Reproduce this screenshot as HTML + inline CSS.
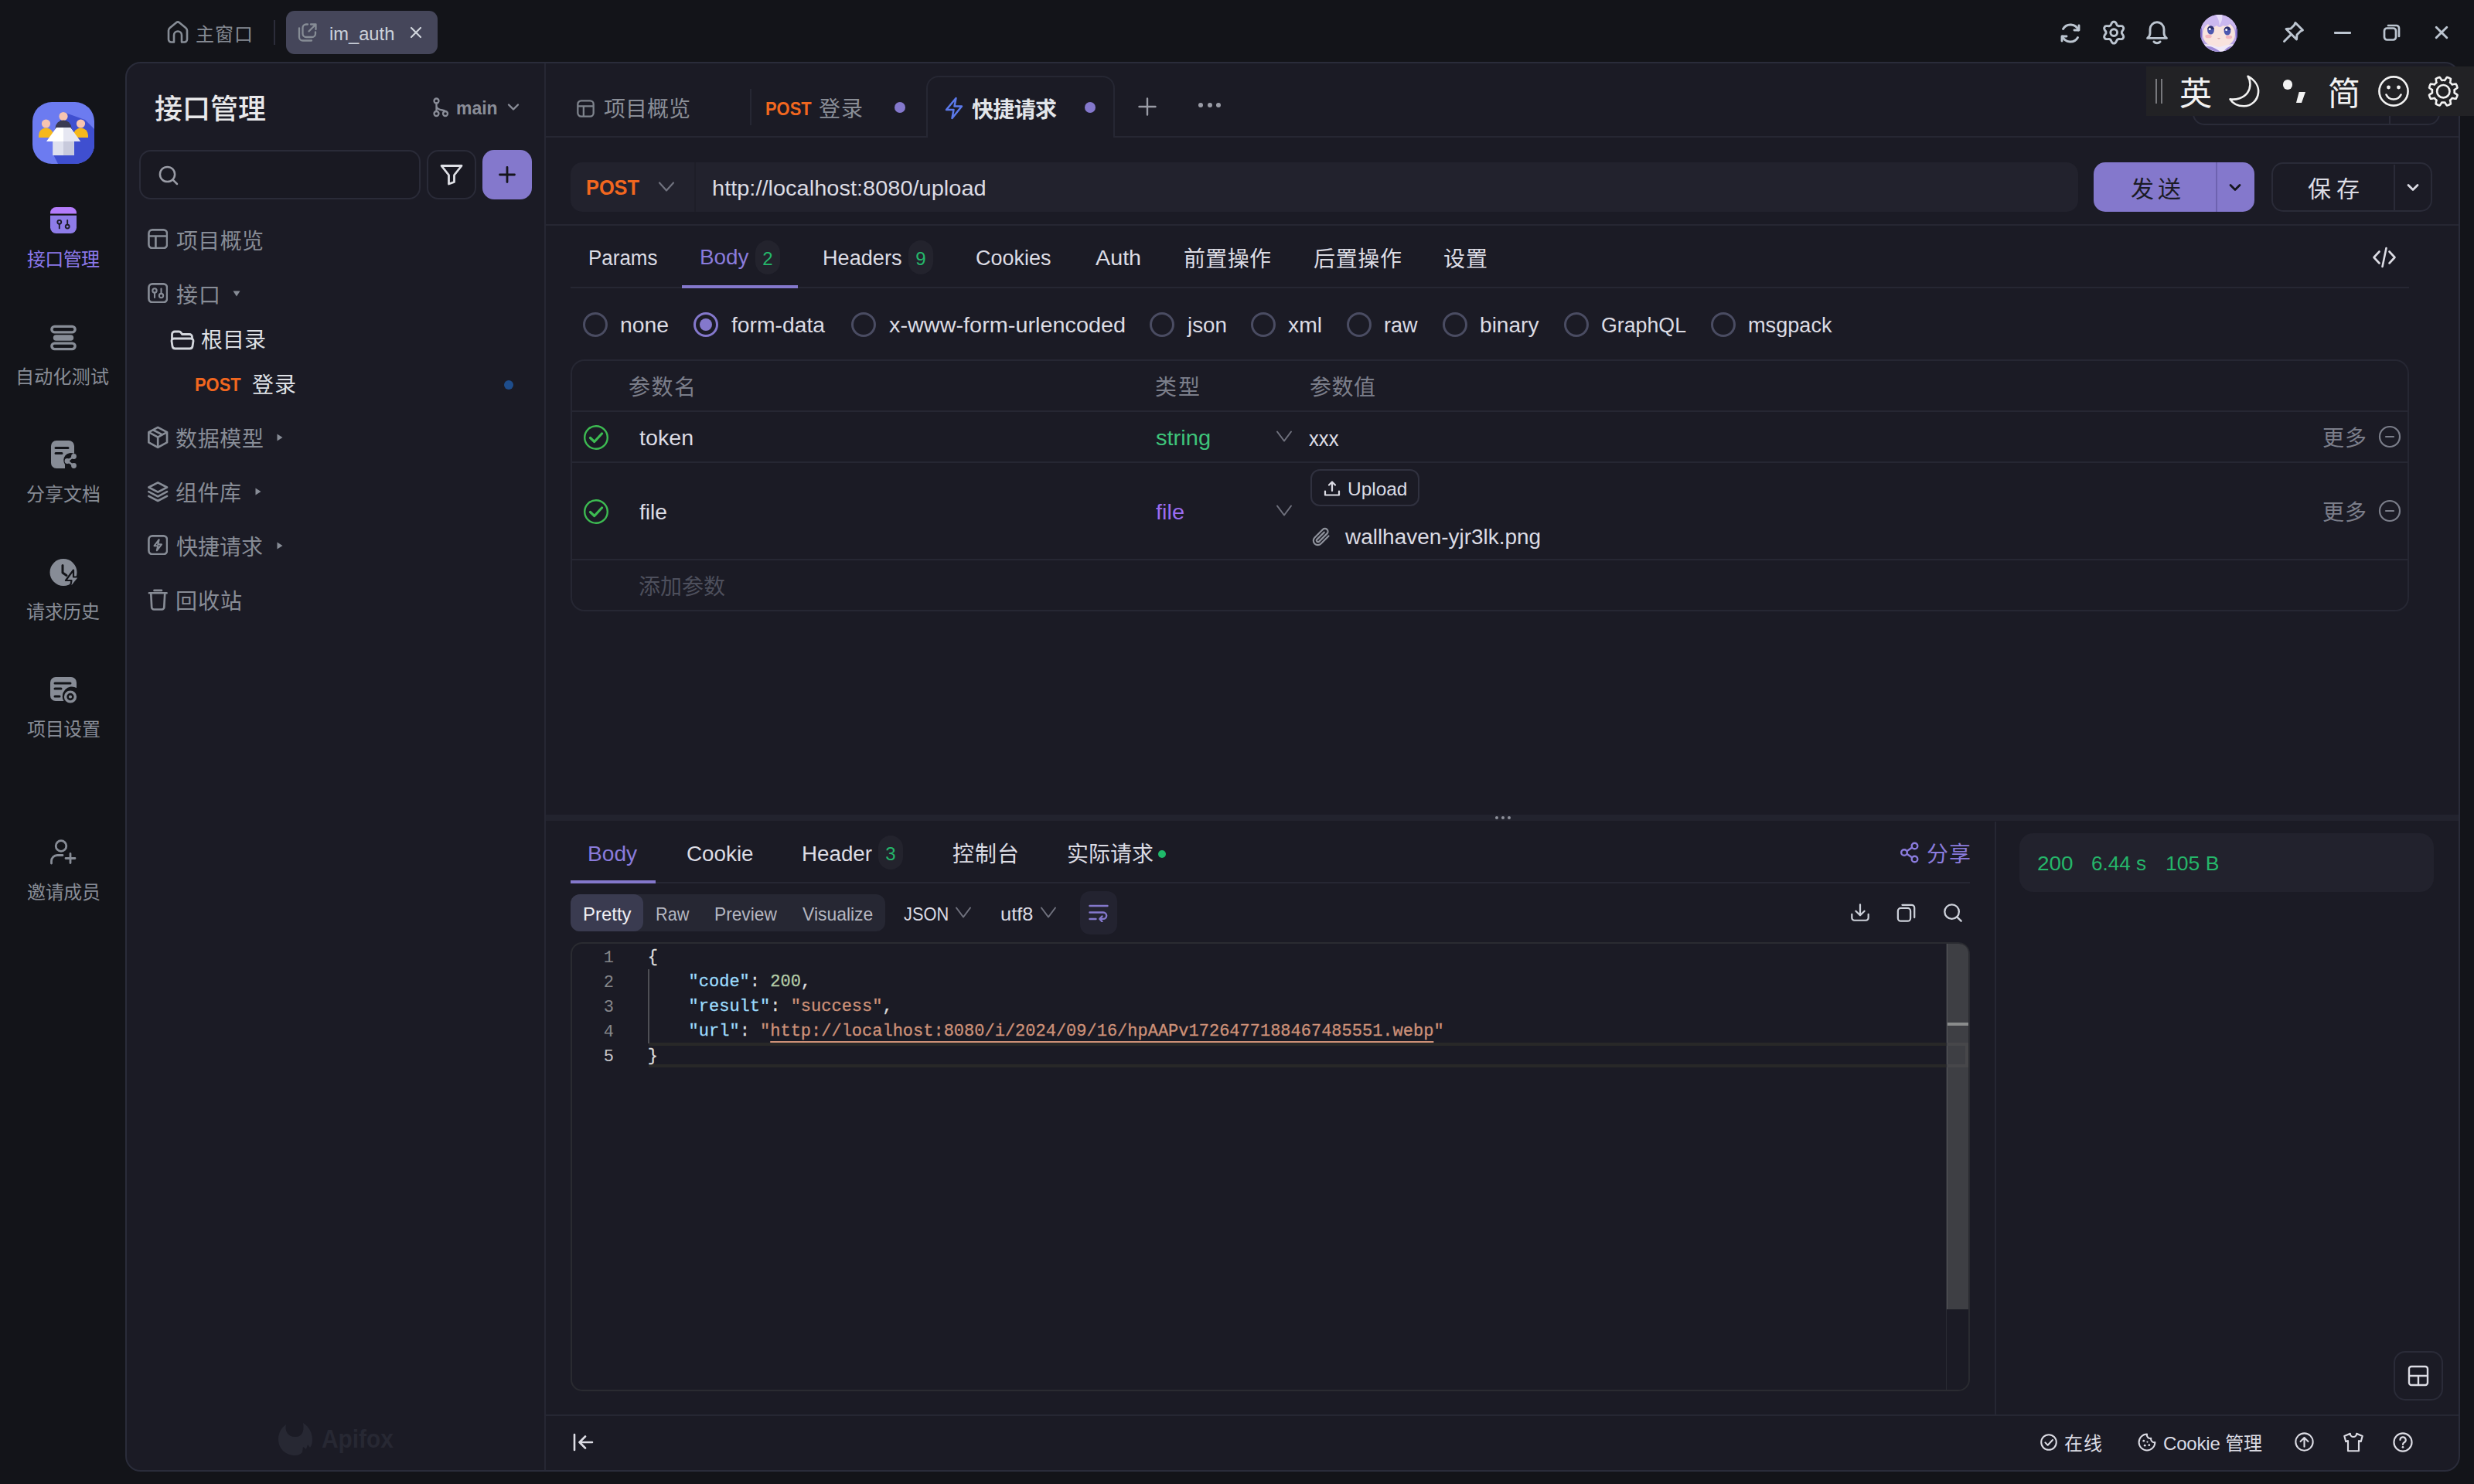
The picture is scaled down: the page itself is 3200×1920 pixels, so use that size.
<!DOCTYPE html>
<html lang="zh-CN"><head><meta charset="utf-8"><title>Apifox - im_auth</title><style>
html,body{margin:0;padding:0;}
body{width:3200px;height:1920px;position:relative;overflow:hidden;background:#131419;font-family:"Liberation Sans","Noto Sans CJK SC",sans-serif;}
.b{position:absolute;box-sizing:border-box;display:block;}
.t{position:absolute;white-space:pre;display:block;}
</style></head><body>
<div id="window-chrome">
<div class="b" style="left:162px;top:80px;width:3020px;height:1824px;background:#1b1b25;border:2px solid #2a2c3a;border-radius:20px;"></div>
<div class="b" style="left:704px;top:82px;width:2px;height:1820px;background:#262733;"></div>
<svg class="b" style="left:215px;top:26px;" width="30" height="32" viewBox="0 0 30 32" fill="none"><path d="M3 13.5 C3 12 3.6 11 4.8 10 L13 3.2 a3.2 3.2 0 0 1 4 0 L25.2 10 C26.4 11 27 12 27 13.5 V25 a3.5 3.5 0 0 1 -3.5 3.5 H20 V19.5 a5 5 0 0 0 -10 0 V28.5 H6.5 a3.5 3.5 0 0 1 -3.5 -3.5 Z" stroke="#878d96" stroke-width="2.6" stroke-linejoin="round"/></svg>
<span class="t" id="t0" style="left:253.00px;top:27.5px;font-size:24px;line-height:34px;color:#868b94;letter-spacing:1.000px;">主窗口</span>
<div class="b" style="left:354px;top:26px;width:2px;height:32px;background:#2c2d3a;"></div>
<div class="b" style="left:370px;top:14px;width:196px;height:56px;background:#45465a;border-radius:11px;"></div>
<svg class="b" style="left:385px;top:29px;" width="26" height="26" viewBox="0 0 26 26" fill="none"><path d="M2 7.5 V19 a4.5 4.5 0 0 0 4.5 4.5 H18" stroke="#878d96" stroke-width="2.3" stroke-linecap="round"/><path d="M13 2.5 H11 a4.5 4.5 0 0 0 -4.5 4.5 V14.5 a4.5 4.5 0 0 0 4.5 4.5 H18.5 a4.5 4.5 0 0 0 4.5 -4.5 V12.5" stroke="#878d96" stroke-width="2.3" stroke-linecap="round"/><path d="M17 2.5 H23.5 V9 M23.5 2.5 L14.5 11.5" stroke="#878d96" stroke-width="2.3" stroke-linecap="round" stroke-linejoin="round"/></svg>
<span class="t" id="t1" style="left:426.01px;top:27.0px;font-size:24px;line-height:34px;color:#ccd2da;transform:scaleX(0.9875);transform-origin:0 50%;">im_auth</span>
<svg class="b" style="left:530px;top:34px;" width="16" height="16" viewBox="0 0 16 16" fill="none"><path d="M2 2 L14 14 M14 2 L2 14" stroke="#d0d5dc" stroke-width="2.2" stroke-linecap="round"/></svg>
<svg class="b" style="left:2662px;top:27px;" width="32" height="32" viewBox="0 0 32 32" fill="none"><path d="M27 6 V12 H21" stroke="#bcc5d0" stroke-width="2.9" stroke-linecap="round" stroke-linejoin="round"/><path d="M5 26 V20 H11" stroke="#bcc5d0" stroke-width="2.9" stroke-linecap="round" stroke-linejoin="round"/><path d="M26.3 12 A11 11 0 0 0 6.5 10.5 M5.7 20 A11 11 0 0 0 25.5 21.5" stroke="#bcc5d0" stroke-width="2.9" stroke-linecap="round"/></svg>
<svg class="b" style="left:2718px;top:26px;" width="32" height="32" viewBox="0 0 32 32" fill="none"><path d="M16.2 2.2 L16.6 2.2 L16.9 2.2 L17.3 2.2 L17.6 2.4 L18.0 2.7 L18.3 3.0 L18.6 3.3 L18.8 3.7 L19.1 4.1 L19.3 4.5 L19.5 4.9 L19.7 5.3 L19.9 5.7 L20.1 6.0 L20.2 6.4 L20.4 6.7 L20.6 6.9 L20.8 7.0 L21.1 7.1 L21.3 7.3 L21.5 7.4 L21.8 7.5 L22.0 7.7 L22.3 7.7 L22.6 7.7 L23.0 7.7 L23.4 7.7 L23.8 7.6 L24.3 7.6 L24.7 7.6 L25.2 7.6 L25.6 7.6 L26.1 7.6 L26.5 7.7 L27.0 7.8 L27.3 8.0 L27.7 8.2 L27.9 8.5 L28.1 8.8 L28.2 9.1 L28.4 9.5 L28.6 9.8 L28.7 10.1 L28.8 10.5 L28.7 10.9 L28.6 11.3 L28.5 11.8 L28.3 12.2 L28.1 12.6 L27.8 13.0 L27.6 13.4 L27.3 13.7 L27.1 14.1 L26.9 14.4 L26.7 14.7 L26.5 15.0 L26.4 15.3 L26.4 15.6 L26.4 15.8 L26.4 16.1 L26.4 16.4 L26.4 16.6 L26.4 16.9 L26.5 17.2 L26.7 17.5 L26.9 17.8 L27.1 18.1 L27.3 18.5 L27.6 18.8 L27.8 19.2 L28.1 19.6 L28.3 20.0 L28.5 20.4 L28.6 20.9 L28.7 21.3 L28.8 21.7 L28.7 22.1 L28.6 22.4 L28.4 22.7 L28.2 23.1 L28.1 23.4 L27.9 23.7 L27.7 24.0 L27.3 24.2 L27.0 24.4 L26.5 24.5 L26.1 24.6 L25.6 24.6 L25.2 24.6 L24.7 24.6 L24.3 24.6 L23.8 24.6 L23.4 24.5 L23.0 24.5 L22.6 24.5 L22.3 24.5 L22.0 24.5 L21.8 24.7 L21.5 24.8 L21.3 24.9 L21.1 25.1 L20.8 25.2 L20.6 25.3 L20.4 25.5 L20.2 25.8 L20.1 26.2 L19.9 26.5 L19.7 26.9 L19.5 27.3 L19.3 27.7 L19.1 28.1 L18.8 28.5 L18.6 28.9 L18.3 29.2 L18.0 29.5 L17.6 29.8 L17.3 30.0 L16.9 30.0 L16.6 30.0 L16.2 30.0 L15.8 30.0 L15.5 30.0 L15.1 30.0 L14.8 29.8 L14.4 29.5 L14.1 29.2 L13.8 28.9 L13.6 28.5 L13.3 28.1 L13.1 27.7 L12.9 27.3 L12.7 26.9 L12.5 26.5 L12.3 26.2 L12.2 25.8 L12.0 25.5 L11.8 25.3 L11.6 25.2 L11.3 25.1 L11.1 24.9 L10.9 24.8 L10.6 24.7 L10.4 24.5 L10.1 24.5 L9.8 24.5 L9.4 24.5 L9.0 24.5 L8.6 24.6 L8.1 24.6 L7.7 24.6 L7.2 24.6 L6.8 24.6 L6.3 24.6 L5.9 24.5 L5.4 24.4 L5.1 24.2 L4.7 24.0 L4.5 23.7 L4.3 23.4 L4.2 23.1 L4.0 22.7 L3.8 22.4 L3.7 22.1 L3.6 21.7 L3.7 21.3 L3.8 20.9 L3.9 20.4 L4.1 20.0 L4.3 19.6 L4.6 19.2 L4.8 18.8 L5.1 18.5 L5.3 18.1 L5.5 17.8 L5.7 17.5 L5.9 17.2 L6.0 16.9 L6.0 16.6 L6.0 16.4 L6.0 16.1 L6.0 15.8 L6.0 15.6 L6.0 15.3 L5.9 15.0 L5.7 14.7 L5.5 14.4 L5.3 14.1 L5.1 13.7 L4.8 13.4 L4.6 13.0 L4.3 12.6 L4.1 12.2 L3.9 11.8 L3.8 11.3 L3.7 10.9 L3.6 10.5 L3.7 10.1 L3.8 9.8 L4.0 9.5 L4.2 9.1 L4.3 8.8 L4.5 8.5 L4.7 8.2 L5.1 8.0 L5.4 7.8 L5.9 7.7 L6.3 7.6 L6.8 7.6 L7.2 7.6 L7.7 7.6 L8.1 7.6 L8.6 7.6 L9.0 7.7 L9.4 7.7 L9.8 7.7 L10.1 7.7 L10.4 7.7 L10.6 7.5 L10.9 7.4 L11.1 7.3 L11.3 7.1 L11.6 7.0 L11.8 6.9 L12.0 6.7 L12.2 6.4 L12.3 6.0 L12.5 5.7 L12.7 5.3 L12.9 4.9 L13.1 4.5 L13.3 4.1 L13.6 3.7 L13.8 3.3 L14.1 3.0 L14.4 2.7 L14.8 2.4 L15.1 2.2 L15.5 2.2 L15.8 2.2 Z" stroke="#bcc5d0" stroke-width="2.9" stroke-linejoin="round"/><circle cx="16.2" cy="16.1" r="4.4" stroke="#bcc5d0" stroke-width="2.9"/></svg>
<svg class="b" style="left:2774px;top:26px;" width="32" height="32" viewBox="0 0 32 32" fill="none"><path d="M16 2.8 a9 9 0 0 1 9 9 V17 c0 2.5 1.2 4.6 3.4 6.4 H3.6 C5.8 21.6 7 19.5 7 17 V11.8 a9 9 0 0 1 9 -9 Z" stroke="#bcc5d0" stroke-width="2.9" stroke-linejoin="round"/><path d="M12 28 a4.6 3.4 0 0 0 8 0" stroke="#bcc5d0" stroke-width="2.9" stroke-linecap="round"/></svg>
<svg class="b" style="left:2846px;top:19px" width="48" height="48" viewBox="0 0 48 48"><defs><clipPath id="av"><circle cx="24" cy="24" r="24"/></clipPath></defs><g clip-path="url(#av)"><rect width="48" height="48" fill="#b9a5e6"/><ellipse cx="24" cy="25" rx="21" ry="18" fill="#f8e3de"/><path d="M0 0 H48 V26 C46 18 43 14 39 11 C37 14 33 16 29 14 C28 16 24 17 21 14 C18 17 13 17 10 12 C5 15 2 20 0 27 Z" fill="#cbb8ef"/><path d="M20 0 C23 5 25 9 24.5 14 C28 9 29 4 28 0 Z" fill="#e6dcf8"/><path d="M0 12 C3 18 3 26 1 34 L0 36 Z M48 12 C45 18 45 26 47 34 L48 36 Z" fill="#7f6cc6"/><ellipse cx="13.5" cy="20" rx="4.4" ry="5.6" fill="#4d58b0"/><ellipse cx="35" cy="21" rx="4.4" ry="5.6" fill="#4d58b0"/><path d="M9.1 19 a4.4 4.6 0 0 1 8.8 0 Z M30.6 20 a4.4 4.6 0 0 1 8.8 0 Z" fill="#2c2f6e"/><circle cx="12.2" cy="18.6" r="1.5" fill="#fff"/><circle cx="33.7" cy="19.6" r="1.5" fill="#fff"/><ellipse cx="10.5" cy="28" rx="4.2" ry="2.3" fill="#f3a9b6" opacity=".75"/><ellipse cx="37" cy="29" rx="4.2" ry="2.3" fill="#f3a9b6" opacity=".75"/><path d="M22.5 30.5 q1.5 1 3 0" stroke="#c98d8d" stroke-width=".9" fill="none"/><path d="M0 48 V40 C8 36 14 40 24 42 C34 40 40 36 48 40 V48 Z" fill="#efe9f8"/><path d="M6 41 C14 40 20 44 26 48 H18 C14 45 10 43 4 43 Z M44 40 C38 40 33 43 30 48 H36 C38 45 41 43 46 42 Z" fill="#9d8ad8"/></g></svg>
<svg class="b" style="left:2950px;top:26px;" width="32" height="32" viewBox="0 0 32 32" fill="none"><path d="M19 3.5 L28.5 13 L25.5 14.5 L21 19 L20.5 25 L7 11.5 L13 11 L17.5 6.5 Z" stroke="#bcc5d0" stroke-width="2.9" stroke-linejoin="round"/><path d="M13.5 18.5 L4.5 27.5" stroke="#bcc5d0" stroke-width="2.9" stroke-linecap="round"/></svg>
<div class="b" style="left:3019px;top:41px;width:22px;height:3px;background:#bcc5d0;border-radius:1px;"></div>
<svg class="b" style="left:3082px;top:30px;" width="24" height="24" viewBox="0 0 24 24" fill="none"><rect x="2" y="6.5" width="15" height="15" rx="3.5" stroke="#bcc5d0" stroke-width="2.7"/><path d="M7 3 H17.5 a3.5 3.5 0 0 1 3.5 3.5 V17" stroke="#bcc5d0" stroke-width="2.7" stroke-linecap="round"/></svg>
<svg class="b" style="left:3148px;top:32px;" width="20" height="20" viewBox="0 0 20 20" fill="none"><path d="M3.2 3.2 L16.8 16.8 M16.8 3.2 L3.2 16.8" stroke="#bcc5d0" stroke-width="2.9" stroke-linecap="round"/></svg>
<svg class="b" style="left:42px;top:132px" width="80" height="80" viewBox="0 0 80 80"><defs><clipPath id="ai"><rect width="80" height="80" rx="25"/></clipPath></defs><g clip-path="url(#ai)"><rect width="80" height="80" fill="#6c7bf0"/><path d="M40 13 L68 23 L90 45 V90 H38 L27.5 69 V45 Z" fill="#3f4fd0"/><circle cx="17.5" cy="28" r="5.6" fill="#f7c4b0"/><circle cx="62.5" cy="28" r="5.6" fill="#f7c4b0"/><circle cx="40" cy="18.5" r="5.6" fill="#f7c4b0"/><path d="M8 46 V43 a9.5 9.5 0 0 1 19 0 V46 Z" fill="#f5b81c"/><path d="M53 46 V43 a9.5 9.5 0 0 1 19 0 V46 Z" fill="#f5b81c"/><path d="M29.5 38 V34 a10.5 10.5 0 0 1 21 0 V38 Z" fill="#3a3a52"/><path d="M31 33 H49 L62 51 H53.5 V69 H26.5 V51 H18 Z" fill="#ffffff"/><path d="M40 33 H49 L62 51 H53.5 V69 H40 Z" fill="#e6e7f2"/><path d="M26.5 51 H53.5 V69 H26.5 Z" fill="#dfe1ee"/><path d="M40 51 H53.5 V69 H40 Z" fill="#c8cadc"/></g></svg>
<svg class="b" style="left:65px;top:268px;" width="34" height="34" viewBox="0 0 36 36" fill="none"><path d="M0 8 a8 8 0 0 1 8 -8 H28 a8 8 0 0 1 8 8 V9 H0 Z" fill="#b47cfb"/><path d="M0 11.5 H36 V28 a8 8 0 0 1 -8 8 H8 a8 8 0 0 1 -8 -8 Z" fill="#8e7ce8"/><circle cx="12.5" cy="20.5" r="2.6" stroke="#1b1b25" stroke-width="2"/><path d="M12.5 23 V29" stroke="#1b1b25" stroke-width="2" stroke-linecap="round"/><circle cx="23.5" cy="26.5" r="2.6" stroke="#1b1b25" stroke-width="2"/><path d="M23.5 24 V18" stroke="#1b1b25" stroke-width="2" stroke-linecap="round"/></svg>
<span class="t" id="t2" style="left:35.00px;top:318.5px;font-size:24px;line-height:34px;color:#8b78ea;letter-spacing:-0.667px;">接口管理</span>
<svg class="b" style="left:65px;top:420px;" width="34" height="34" viewBox="0 0 36 36" fill="none"><rect x="2" y="2.5" width="32" height="8" rx="4" stroke="#878c96" stroke-width="3.6"/><rect x="2" y="25.5" width="32" height="8" rx="4" stroke="#878c96" stroke-width="3.6"/><rect x="4" y="14" width="28" height="8" rx="4" fill="#878c96"/></svg>
<span class="t" id="t3" style="left:20.00px;top:471.0px;font-size:24px;line-height:34px;color:#878c96;letter-spacing:0.250px;">自动化测试</span>
<svg class="b" style="left:66px;top:570px;" width="36" height="38" viewBox="0 0 36 38" fill="none"><path d="M0 7 a7 7 0 0 1 7 -7 H23 a7 7 0 0 1 7 7 V17 a9.5 9.5 0 0 0 -12 14 V36 H7 a7 7 0 0 1 -7 -7 Z" fill="#878c96"/><path d="M6 9.5 H22 M6 16.5 H14" stroke="#131419" stroke-width="3" stroke-linecap="round"/><circle cx="29.5" cy="20.5" r="3.4" fill="#878c96"/><circle cx="21" cy="26.5" r="3.4" fill="#878c96"/><circle cx="29.5" cy="32.5" r="3.4" fill="#878c96"/><path d="M29.5 20.5 L21 26.5 L29.5 32.5" stroke="#878c96" stroke-width="2.4"/></svg>
<span class="t" id="t4" style="left:34.00px;top:623.0px;font-size:24px;line-height:34px;color:#878c96;">分享文档</span>
<svg class="b" style="left:64px;top:722px;" width="38" height="40" viewBox="0 0 38 40" fill="none"><path d="M18 1 a17.5 17.5 0 1 1 0 35 a17.5 17.5 0 0 1 0 -35 Z" fill="#878c96"/><path d="M17 9.5 V19 L22 22.5" stroke="#131419" stroke-width="3" stroke-linecap="round" stroke-linejoin="round"/><path d="M31 15.5 L21 29 H28.5 L26.5 39.5 L38.5 24.5 H31 Z" fill="#878c96" stroke="#131419" stroke-width="2.2" stroke-linejoin="round"/></svg>
<span class="t" id="t5" style="left:34.00px;top:775.0px;font-size:24px;line-height:34px;color:#878c96;letter-spacing:-0.333px;">请求历史</span>
<svg class="b" style="left:65px;top:876px;" width="38" height="38" viewBox="0 0 38 38" fill="none"><path d="M0 7 a7 7 0 0 1 7 -7 H27 a7 7 0 0 1 7 7 V14 a12 12 0 0 0 -16 17 H7 a7 7 0 0 1 -7 -7 Z" fill="#878c96"/><path d="M6 8 H26 M6 15 H14 M6 25 H12" stroke="#131419" stroke-width="3" stroke-linecap="round"/><circle cx="26" cy="25.5" r="9.2" fill="#878c96" stroke="#131419" stroke-width="2.2"/><circle cx="26" cy="25.5" r="3.4" stroke="#131419" stroke-width="2.6"/></svg>
<span class="t" id="t6" style="left:35.00px;top:927.0px;font-size:24px;line-height:34px;color:#878c96;letter-spacing:-0.333px;">项目设置</span>
<svg class="b" style="left:64px;top:1085px;" width="36" height="34" viewBox="0 0 36 34" fill="none"><circle cx="15" cy="9.5" r="6.8" stroke="#878c96" stroke-width="2.8"/><path d="M2.5 32 V29 a7.5 7.5 0 0 1 7.5 -7.5 H17" stroke="#878c96" stroke-width="2.8" stroke-linecap="round"/><path d="M27 19.5 V31.5 M21 25.5 H33" stroke="#878c96" stroke-width="2.8" stroke-linecap="round"/></svg>
<span class="t" id="t7" style="left:35.00px;top:1138.0px;font-size:24px;line-height:34px;color:#878c96;letter-spacing:-0.333px;">邀请成员</span>
</div>
<aside id="api-tree">
<span class="t" id="t8" style="left:200.00px;top:117.0px;font-size:36px;line-height:50px;color:#e8e8ea;font-weight:500;">接口管理</span>
<svg class="b" style="left:558px;top:124px;" width="24" height="30" viewBox="0 0 24 30" fill="none"><circle cx="6.5" cy="6.5" r="3" stroke="#8a8d98" stroke-width="2.3"/><circle cx="6.5" cy="23" r="3" stroke="#8a8d98" stroke-width="2.3"/><circle cx="18" cy="23" r="3" stroke="#8a8d98" stroke-width="2.3"/><path d="M6.5 9.5 V20 M6.5 13 c0 4 4 5 7.5 5.5 c2 .4 3.5 1 4 1.5" stroke="#8a8d98" stroke-width="2.3" stroke-linecap="round"/></svg>
<span class="t" id="t9" style="left:590.04px;top:122.5px;font-size:24px;line-height:34px;color:#8a8d98;font-weight:700;transform:scaleX(0.9567);transform-origin:0 50%;">main</span>
<svg class="b" style="left:656px;top:132px;" width="16" height="14" viewBox="0 0 16 14" fill="none"><path d="M2 3.5 L8 9.5 L14 3.5" stroke="#8a8d98" stroke-width="2.4" stroke-linecap="round" stroke-linejoin="round"/></svg>
<div class="b" style="left:180px;top:194px;width:364px;height:64px;background:#191922;border:2px solid #2a2b38;border-radius:15px;"></div>
<svg class="b" style="left:204px;top:213px;" width="28" height="28" viewBox="0 0 28 28" fill="none"><circle cx="12.5" cy="12.5" r="9.6" stroke="#9a9ca6" stroke-width="2.5"/><path d="M19.6 19.6 L25 25" stroke="#9a9ca6" stroke-width="2.5" stroke-linecap="round"/></svg>
<div class="b" style="left:552px;top:194px;width:64px;height:64px;background:#191922;border:2px solid #2a2b38;border-radius:15px;"></div>
<svg class="b" style="left:568px;top:210px;" width="32" height="32" viewBox="0 0 32 32" fill="none"><path d="M3 4.5 H29 L19.5 16.5 V25.5 L12.5 28 V16.5 Z" stroke="#dfe0e6" stroke-width="2.8" stroke-linejoin="round"/></svg>
<div class="b" style="left:624px;top:194px;width:64px;height:64px;background:#8478cc;border-radius:15px;"></div>
<svg class="b" style="left:644px;top:214px;" width="24" height="24" viewBox="0 0 24 24" fill="none"><path d="M12 2.5 V21.5 M2.5 12 H21.5" stroke="#15151c" stroke-width="2.8" stroke-linecap="round"/></svg>
<svg class="b" style="left:190.8px;top:295.8px;" width="26.5" height="26.5" viewBox="0 0 28 28" fill="none"><rect x="1.5" y="1.5" width="25" height="25" rx="5" stroke="#878c96" stroke-width="2.8"/><path d="M1.5 10 H26.5 M11 10 V26.5" stroke="#878c96" stroke-width="2.8"/></svg>
<span class="t" id="t10" style="left:228.00px;top:292.5px;font-size:28px;line-height:39px;color:#878c96;letter-spacing:0.333px;">项目概览</span>
<svg class="b" style="left:190.8px;top:365.8px;" width="26.5" height="26.5" viewBox="0 0 28 28" fill="none"><rect x="1.5" y="1.5" width="25" height="25" rx="5" stroke="#878c96" stroke-width="2.8"/><circle cx="9.5" cy="10.5" r="2.8" stroke="#878c96" stroke-width="2.2"/><path d="M9.5 13.5 V20" stroke="#878c96" stroke-width="2.2" stroke-linecap="round"/><circle cx="18.5" cy="17.5" r="2.8" stroke="#878c96" stroke-width="2.2"/><path d="M18.5 14.5 V8" stroke="#878c96" stroke-width="2.2" stroke-linecap="round"/></svg>
<span class="t" id="t11" style="left:228.00px;top:362.5px;font-size:28px;line-height:39px;color:#878c96;letter-spacing:1.000px;">接口</span>
<svg class="b" style="left:301px;top:376px;" width="10" height="8" viewBox="0 0 10 8" fill="none"><path d="M0.5 0.5 H9.5 L5 7.5 Z" fill="#878c96"/></svg>
<svg class="b" style="left:220px;top:426px;" width="32" height="28" viewBox="0 0 32 28" fill="none"><path d="M2.5 12 V6.5 a3.5 3.5 0 0 1 3.5 -3.5 H11.5 c1.2 0 2 .5 2.8 1.6 L15.5 6.5 H25 a3.5 3.5 0 0 1 3.5 3.5 V12" stroke="#d4d7dd" stroke-width="2.8" stroke-linejoin="round" stroke-linecap="round"/><path d="M5.5 12 H27 a3 3 0 0 1 3 3.4 L29 22 a3.5 3.5 0 0 1 -3.5 3 H6.5 a3.5 3.5 0 0 1 -3.5 -3 L2 15.4 a3 3 0 0 1 3 -3.4 Z" stroke="#d4d7dd" stroke-width="2.8" stroke-linejoin="round"/></svg>
<span class="t" id="t12" style="left:260.00px;top:421.0px;font-size:28px;line-height:39px;color:#dfe1e6;">根目录</span>
<span class="t" id="t13" style="left:252.09px;top:481.0px;font-size:24px;line-height:34px;color:#f2671f;font-weight:700;transform:scaleX(0.9121);transform-origin:0 50%;">POST</span>
<span class="t" id="t14" style="left:326.00px;top:478.5px;font-size:28px;line-height:39px;color:#dfe1e6;letter-spacing:1.000px;">登录</span>
<div class="b" style="left:652px;top:492px;width:12px;height:12px;background:#1e4d8c;border-radius:6px;"></div>
<svg class="b" style="left:189.8px;top:550.9px;" width="28.4" height="30.3" viewBox="0 0 30 32" fill="none"><path d="M15 2 L27.5 8.5 V22.5 L15 29.5 L2.5 22.5 V8.5 Z" stroke="#878c96" stroke-width="2.8" stroke-linejoin="round"/><path d="M2.5 8.5 L15 15.5 L27.5 8.5 M15 15.5 V29.5 M8.5 5.5 L21 12" stroke="#878c96" stroke-width="2.8" stroke-linejoin="round"/></svg>
<span class="t" id="t15" style="left:227.00px;top:548.5px;font-size:28px;line-height:39px;color:#878c96;letter-spacing:0.667px;">数据模型</span>
<svg class="b" style="left:358px;top:561px;" width="8" height="10" viewBox="0 0 8 10" fill="none"><path d="M0.5 0.5 V9.5 L7.5 5 Z" fill="#878c96"/></svg>
<svg class="b" style="left:189.8px;top:621.8px;" width="28.4" height="28.4" viewBox="0 0 30 30" fill="none"><path d="M15 2.5 L27.5 9 L15 15.5 L2.5 9 Z" stroke="#878c96" stroke-width="2.8" stroke-linejoin="round"/><path d="M2.5 15 L15 21.5 L27.5 15 M2.5 21 L15 27.5 L27.5 21" stroke="#878c96" stroke-width="2.8" stroke-linejoin="round" stroke-linecap="round"/></svg>
<span class="t" id="t16" style="left:227.00px;top:618.5px;font-size:28px;line-height:39px;color:#878c96;letter-spacing:0.500px;">组件库</span>
<svg class="b" style="left:330px;top:631px;" width="8" height="10" viewBox="0 0 8 10" fill="none"><path d="M0.5 0.5 V9.5 L7.5 5 Z" fill="#878c96"/></svg>
<svg class="b" style="left:190.8px;top:691.8px;" width="26.5" height="26.5" viewBox="0 0 28 28" fill="none"><rect x="1.5" y="1.5" width="25" height="25" rx="5" stroke="#878c96" stroke-width="2.8"/><path d="M15.5 6.5 L9 15 H14 L12.5 21.5 L19 13 H14 Z" stroke="#878c96" stroke-width="2.2" stroke-linejoin="round"/></svg>
<span class="t" id="t17" style="left:228.00px;top:688.5px;font-size:28px;line-height:39px;color:#878c96;">快捷请求</span>
<svg class="b" style="left:358px;top:701px;" width="8" height="10" viewBox="0 0 8 10" fill="none"><path d="M0.5 0.5 V9.5 L7.5 5 Z" fill="#878c96"/></svg>
<svg class="b" style="left:190.8px;top:761.8px;" width="26.5" height="28.4" viewBox="0 0 28 30" fill="none"><path d="M2 5.5 H26 M9 2 H19" stroke="#878c96" stroke-width="2.8" stroke-linecap="round"/><path d="M4.5 6 L5.5 25 a3 3 0 0 0 3 3 H19.5 a3 3 0 0 0 3 -3 L23.5 6" stroke="#878c96" stroke-width="2.8" stroke-linejoin="round"/></svg>
<span class="t" id="t18" style="left:227.00px;top:758.5px;font-size:28px;line-height:39px;color:#878c96;letter-spacing:1.000px;">回收站</span>
<svg class="b" style="left:358px;top:1839px;" width="48" height="46" viewBox="0 0 48 46" fill="none"><path d="M24 44 C10 44 2 34 2 23 C2 15 6 8 12 4 C10 12 14 20 24 20 C32 20 36 14 34 2 C42 7 46 15 46 24 C46 28 45 31 43 34 L40 30 L38 36 L34 33 L33 40 C30 43 27 44 24 44 Z" fill="#272833"/></svg>
<span class="t" id="t19" style="left:416.00px;top:1837.0px;font-size:34px;line-height:48px;color:#272833;font-weight:700;transform:scaleX(0.8785);transform-origin:0 50%;">Apifox</span>
</aside>
<main id="request-editor">
<div class="b" style="left:706px;top:176px;width:2474px;height:2px;background:#262733;"></div>
<svg class="b" style="left:746px;top:129px;" width="23" height="23" viewBox="0 0 26 26" fill="none"><rect x="1.5" y="1.5" width="23" height="23" rx="5" stroke="#7e838c" stroke-width="2.6"/><path d="M1.5 9.5 H24.5 M10 9.5 V24.5" stroke="#7e838c" stroke-width="2.6"/></svg>
<span class="t" id="t20" style="left:781.00px;top:122.0px;font-size:28px;line-height:39px;color:#8a8e97;">项目概览</span>
<div class="b" style="left:970px;top:115px;width:2px;height:47px;background:#262733;"></div>
<span class="t" id="t21" style="left:990.09px;top:123.5px;font-size:24px;line-height:34px;color:#f2671f;font-weight:700;transform:scaleX(0.9121);transform-origin:0 50%;">POST</span>
<span class="t" id="t22" style="left:1059.00px;top:121.5px;font-size:28px;line-height:39px;color:#8a8e97;letter-spacing:1.000px;">登录</span>
<div class="b" style="left:1157px;top:132px;width:14px;height:14px;background:#8478cc;border-radius:7px;"></div>
<div class="b" style="left:1198px;top:98px;width:244px;height:80px;background:#1b1b25;border:2px solid #262733;border-radius:16px 16px 0 0;border-bottom:none;"></div>
<svg class="b" style="left:1221px;top:125px;" width="26" height="30" viewBox="0 0 26 30" fill="none"><path d="M15.5 2 L3 17 H12.5 L10.5 28 L23 12.5 H13.5 Z" stroke="#5b79ea" stroke-width="2.5" stroke-linejoin="round"/></svg>
<span class="t" id="t23" style="left:1257.00px;top:122.5px;font-size:28px;line-height:39px;color:#e2e6ea;font-weight:700;letter-spacing:-0.667px;">快捷请求</span>
<div class="b" style="left:1403px;top:132px;width:14px;height:14px;background:#8478cc;border-radius:7px;"></div>
<svg class="b" style="left:1472px;top:126px;" width="24" height="24" viewBox="0 0 24 24" fill="none"><path d="M12 1.5 V22.5 M1.5 12 H22.5" stroke="#9a9ca6" stroke-width="2.4" stroke-linecap="round"/></svg>
<div class="b" style="left:1550.0px;top:133px;width:6.0px;height:6px;background:#9a9ca6;border-radius:3px;"></div>
<div class="b" style="left:1561.5px;top:133px;width:6.0px;height:6px;background:#9a9ca6;border-radius:3px;"></div>
<div class="b" style="left:1573.0px;top:133px;width:6.0px;height:6px;background:#9a9ca6;border-radius:3px;"></div>
<div class="b" style="left:2836px;top:100px;width:320px;height:62px;border:2px solid #2a2b38;border-radius:15px;"></div>
<div class="b" style="left:3090px;top:102px;width:2px;height:58px;background:#2a2b38;"></div>
<div class="b" style="left:738px;top:210px;width:1950px;height:64px;background:#22222d;border-radius:15px;"></div>
<div class="b" style="left:898px;top:210px;width:2px;height:64px;background:#1e1e28;"></div>
<span class="t" id="t24" style="left:758.09px;top:223.0px;font-size:28px;line-height:39px;color:#f2671f;font-weight:700;transform:scaleX(0.9051);transform-origin:0 50%;">POST</span>
<svg class="b" style="left:851px;top:233px;" width="22" height="18" viewBox="0 0 22 18" fill="none"><path d="M2 3.5 L11 13.5 L20 3.5" stroke="#70727e" stroke-width="2.2" stroke-linecap="round" stroke-linejoin="round"/></svg>
<span class="t" id="t25" style="left:920.96px;top:223.5px;font-size:28px;line-height:39px;color:#dcdce4;transform:scaleX(1.0356);transform-origin:0 50%;">http://localhost:8080/upload</span>
<div class="b" style="left:2708px;top:210px;width:208px;height:64px;background:#8478cc;border-radius:15px;"></div>
<div class="b" style="left:2866px;top:210px;width:2px;height:64px;background:#6d62b0;"></div>
<span class="t" id="t26" style="left:2756.00px;top:223.5px;font-size:30px;line-height:42px;color:#1b1b25;letter-spacing:-1.667px;">发 送</span>
<svg class="b" style="left:2882px;top:236px;" width="18" height="14" viewBox="0 0 18 14" fill="none"><path d="M3 3.5 L9 9.5 L15 3.5" stroke="#15151c" stroke-width="2.8" stroke-linecap="round" stroke-linejoin="round"/></svg>
<div class="b" style="left:2938px;top:210px;width:208px;height:64px;border:2px solid #2a2b38;border-radius:15px;"></div>
<div class="b" style="left:3096px;top:213px;width:2px;height:59px;background:#2a2b38;"></div>
<span class="t" id="t27" style="left:2985.00px;top:223.5px;font-size:30px;line-height:42px;color:#dcdce4;letter-spacing:-0.667px;">保 存</span>
<svg class="b" style="left:3112px;top:236px;" width="18" height="14" viewBox="0 0 18 14" fill="none"><path d="M3 3.5 L9 9.5 L15 3.5" stroke="#dcdce4" stroke-width="2.8" stroke-linecap="round" stroke-linejoin="round"/></svg>
<div class="b" style="left:706px;top:290px;width:2474px;height:2px;background:#262733;"></div>
<span class="t" id="t28" style="left:761.08px;top:315.0px;font-size:27px;line-height:38px;color:#dcdce4;transform:scaleX(0.9611);transform-origin:0 50%;">Params</span>
<span class="t" id="t29" style="left:904.93px;top:314.4px;font-size:27px;line-height:38px;color:#8a7bdc;transform:scaleX(1.0326);transform-origin:0 50%;">Body</span>
<div class="b" style="left:977px;top:311px;width:32px;height:44px;background:#23232d;border-radius:16px;"></div>
<span class="t" id="t30" style="left:986.00px;top:317.5px;font-size:24px;line-height:34px;color:#25b76a;width:14px;text-align:center;">2</span>
<span class="t" id="t31" style="left:1063.99px;top:314.6px;font-size:27px;line-height:38px;color:#dcdce4;transform:scaleX(1.0045);transform-origin:0 50%;">Headers</span>
<div class="b" style="left:1175px;top:311px;width:32px;height:44px;background:#23232d;border-radius:16px;"></div>
<span class="t" id="t32" style="left:1184.00px;top:317.5px;font-size:24px;line-height:34px;color:#25b76a;width:14px;text-align:center;">9</span>
<span class="t" id="t33" style="left:1262.00px;top:315.0px;font-size:27px;line-height:38px;color:#dcdce4;transform:scaleX(0.9995);transform-origin:0 50%;">Cookies</span>
<span class="t" id="t34" style="left:1417.00px;top:315.0px;font-size:27px;line-height:38px;color:#dcdce4;transform:scaleX(1.0637);transform-origin:0 50%;">Auth</span>
<span class="t" id="t35" style="left:1531.00px;top:315.7px;font-size:28px;line-height:39px;color:#dcdce4;letter-spacing:0.333px;">前置操作</span>
<span class="t" id="t36" style="left:1699.00px;top:315.7px;font-size:28px;line-height:39px;color:#dcdce4;letter-spacing:0.667px;">后置操作</span>
<span class="t" id="t37" style="left:1867.00px;top:315.7px;font-size:28px;line-height:39px;color:#dcdce4;letter-spacing:1.000px;">设置</span>
<div class="b" style="left:738px;top:371px;width:2378px;height:2px;background:#262733;"></div>
<div class="b" style="left:882px;top:369px;width:150px;height:4px;background:#8478cc;"></div>
<svg class="b" style="left:3068px;top:318px;" width="32" height="30" viewBox="0 0 32 30" fill="none"><path d="M9.5 7.5 L2.5 15 L9.5 22.5 M22.5 7.5 L29.5 15 L22.5 22.5 M18.5 3 L13.5 27" stroke="#dcdce4" stroke-width="2.6" stroke-linecap="round" stroke-linejoin="round"/></svg>
<div class="b" style="left:754px;top:404px;width:32px;height:32px;border:3px solid #4a4c62;border-radius:16px;"></div>
<span class="t" id="t38" style="left:801.95px;top:401.5px;font-size:27px;line-height:38px;color:#dcdce4;transform:scaleX(1.0508);transform-origin:0 50%;">none</span>
<div class="b" style="left:897px;top:404px;width:32px;height:32px;border:3px solid #8478cc;border-radius:16px;"></div>
<div class="b" style="left:905px;top:412px;width:16px;height:16px;background:#8478cc;border-radius:8px;"></div>
<span class="t" id="t39" style="left:946.00px;top:401.5px;font-size:27px;line-height:38px;color:#dcdce4;transform:scaleX(1.0470);transform-origin:0 50%;">form-data</span>
<div class="b" style="left:1101px;top:404px;width:32px;height:32px;border:3px solid #4a4c62;border-radius:16px;"></div>
<span class="t" id="t40" style="left:1150.00px;top:401.5px;font-size:27px;line-height:38px;color:#dcdce4;transform:scaleX(1.0681);transform-origin:0 50%;">x-www-form-urlencoded</span>
<div class="b" style="left:1487px;top:404px;width:32px;height:32px;border:3px solid #4a4c62;border-radius:16px;"></div>
<span class="t" id="t41" style="left:1536.03px;top:401.5px;font-size:27px;line-height:38px;color:#dcdce4;transform:scaleX(1.0300);transform-origin:0 50%;">json</span>
<div class="b" style="left:1618px;top:404px;width:32px;height:32px;border:3px solid #4a4c62;border-radius:16px;"></div>
<span class="t" id="t42" style="left:1666.00px;top:401.5px;font-size:27px;line-height:38px;color:#dcdce4;transform:scaleX(1.0490);transform-origin:0 50%;">xml</span>
<div class="b" style="left:1742px;top:404px;width:32px;height:32px;border:3px solid #4a4c62;border-radius:16px;"></div>
<span class="t" id="t43" style="left:1790.00px;top:401.5px;font-size:27px;line-height:38px;color:#dcdce4;transform:scaleX(0.9998);transform-origin:0 50%;">raw</span>
<div class="b" style="left:1866px;top:404px;width:32px;height:32px;border:3px solid #4a4c62;border-radius:16px;"></div>
<span class="t" id="t44" style="left:1913.96px;top:401.5px;font-size:27px;line-height:38px;color:#dcdce4;transform:scaleX(1.0406);transform-origin:0 50%;">binary</span>
<div class="b" style="left:2023px;top:404px;width:32px;height:32px;border:3px solid #4a4c62;border-radius:16px;"></div>
<span class="t" id="t45" style="left:2071.01px;top:401.5px;font-size:27px;line-height:38px;color:#dcdce4;transform:scaleX(0.9905);transform-origin:0 50%;">GraphQL</span>
<div class="b" style="left:2213px;top:404px;width:32px;height:32px;border:3px solid #4a4c62;border-radius:16px;"></div>
<span class="t" id="t46" style="left:2261.00px;top:401.5px;font-size:27px;line-height:38px;color:#dcdce4;transform:scaleX(1.0043);transform-origin:0 50%;">msgpack</span>
<div class="b" style="left:738px;top:465px;width:2378px;height:326px;border:2px solid #262733;border-radius:18px;"></div>
<div class="b" style="left:740px;top:531px;width:2374px;height:2px;background:#262733;"></div>
<div class="b" style="left:740px;top:597px;width:2374px;height:2px;background:#262733;"></div>
<div class="b" style="left:740px;top:723px;width:2374px;height:2px;background:#262733;"></div>
<span class="t" id="t47" style="left:813.00px;top:482.0px;font-size:28px;line-height:39px;color:#7b7e8a;letter-spacing:1.500px;">参数名</span>
<span class="t" id="t48" style="left:1494.00px;top:482.0px;font-size:28px;line-height:39px;color:#7b7e8a;letter-spacing:2.000px;">类型</span>
<span class="t" id="t49" style="left:1694.00px;top:482.0px;font-size:28px;line-height:39px;color:#7b7e8a;letter-spacing:0.500px;">参数值</span>
<svg class="b" style="left:754px;top:549px;" width="34" height="34" viewBox="0 0 34 34" fill="none"><circle cx="17" cy="17" r="14.8" stroke="#3dbb52" stroke-width="2.4"/><path d="M9.5 17.5 L14.8 22.5 L24.5 12" stroke="#3dbb52" stroke-width="3.2" stroke-linecap="round" stroke-linejoin="round"/></svg>
<span class="t" id="t50" style="left:826.50px;top:548.3px;font-size:27px;line-height:38px;color:#dcdce4;transform:scaleX(1.0610);transform-origin:0 50%;">token</span>
<span class="t" id="t51" style="left:1495.00px;top:548.0px;font-size:27px;line-height:38px;color:#3ec47a;transform:scaleX(1.0768);transform-origin:0 50%;">string</span>
<svg class="b" style="left:1650px;top:556px;" width="22" height="18" viewBox="0 0 22 18" fill="none"><path d="M2 2.5 L11 14.5 L20 2.5" stroke="#70727e" stroke-width="2" stroke-linecap="round" stroke-linejoin="round"/></svg>
<span class="t" id="t52" style="left:1693.00px;top:549.0px;font-size:27px;line-height:38px;color:#dcdce4;transform:scaleX(0.9512);transform-origin:0 50%;">xxx</span>
<span class="t" id="t53" style="left:3004.00px;top:548.0px;font-size:28px;line-height:39px;color:#7b7e8a;letter-spacing:1.000px;">更多</span>
<svg class="b" style="left:3076px;top:550px;" width="30" height="30" viewBox="0 0 30 30" fill="none"><circle cx="15" cy="15" r="13" stroke="#7b7e8a" stroke-width="2.2"/><path d="M10 15 H20" stroke="#7b7e8a" stroke-width="2.2" stroke-linecap="round"/></svg>
<svg class="b" style="left:754px;top:645px;" width="34" height="34" viewBox="0 0 34 34" fill="none"><circle cx="17" cy="17" r="14.8" stroke="#3dbb52" stroke-width="2.4"/><path d="M9.5 17.5 L14.8 22.5 L24.5 12" stroke="#3dbb52" stroke-width="3.2" stroke-linecap="round" stroke-linejoin="round"/></svg>
<span class="t" id="t54" style="left:827.00px;top:644.0px;font-size:27px;line-height:38px;color:#dcdce4;transform:scaleX(1.0448);transform-origin:0 50%;">file</span>
<span class="t" id="t55" style="left:1495.00px;top:644.0px;font-size:27px;line-height:38px;color:#9a6cf2;transform:scaleX(1.0747);transform-origin:0 50%;">file</span>
<svg class="b" style="left:1650px;top:652px;" width="22" height="18" viewBox="0 0 22 18" fill="none"><path d="M2 2.5 L11 14.5 L20 2.5" stroke="#70727e" stroke-width="2" stroke-linecap="round" stroke-linejoin="round"/></svg>
<div class="b" style="left:1695px;top:607px;width:141px;height:48px;border:2px solid #30313f;border-radius:12px;"></div>
<svg class="b" style="left:1712px;top:621px;" width="22" height="22" viewBox="0 0 22 22" fill="none"><path d="M11 2.5 V14 M7 6.5 L11 2.5 L15 6.5" stroke="#dcdce4" stroke-width="2.2" stroke-linecap="round" stroke-linejoin="round"/><path d="M2 14.5 V19.5 H20 V14.5" stroke="#dcdce4" stroke-width="2.2" stroke-linecap="round" stroke-linejoin="round"/></svg>
<span class="t" id="t56" style="left:1742.98px;top:615.5px;font-size:24px;line-height:34px;color:#dcdce4;transform:scaleX(1.0175);transform-origin:0 50%;">Upload</span>
<svg class="b" style="left:1695px;top:681px;" width="28" height="28" viewBox="0 0 28 28" fill="none"><path d="M23.5 12.5 L13.5 22.5 a5.6 5.6 0 0 1 -8 -8 L16 4 a3.8 3.8 0 0 1 5.4 5.4 L11.2 19.6 a1.9 1.9 0 0 1 -2.7 -2.7 L17.8 7.6" stroke="#8e919b" stroke-width="2.2" stroke-linecap="round" stroke-linejoin="round"/></svg>
<span class="t" id="t57" style="left:1740.03px;top:676.0px;font-size:27px;line-height:38px;color:#dcdce4;transform:scaleX(1.0343);transform-origin:0 50%;">wallhaven-yjr3lk.png</span>
<span class="t" id="t58" style="left:3004.00px;top:644.0px;font-size:28px;line-height:39px;color:#7b7e8a;letter-spacing:1.000px;">更多</span>
<svg class="b" style="left:3076px;top:646px;" width="30" height="30" viewBox="0 0 30 30" fill="none"><circle cx="15" cy="15" r="13" stroke="#7b7e8a" stroke-width="2.2"/><path d="M10 15 H20" stroke="#7b7e8a" stroke-width="2.2" stroke-linecap="round"/></svg>
<span class="t" id="t59" style="left:826.00px;top:739.5px;font-size:28px;line-height:39px;color:#4d4f5c;">添加参数</span>
<div class="b" style="left:706px;top:1054px;width:2474px;height:8px;background:#22232e;"></div>
<div class="b" style="left:1934px;top:1056px;width:4px;height:4px;background:#8e919b;border-radius:2px;"></div>
<div class="b" style="left:1942px;top:1056px;width:4px;height:4px;background:#8e919b;border-radius:2px;"></div>
<div class="b" style="left:1950px;top:1056px;width:4px;height:4px;background:#8e919b;border-radius:2px;"></div>
<div class="b" style="left:2580px;top:1063px;width:2px;height:767px;background:#262733;"></div>
</main>
<section id="response-panel">
<span class="t" id="t60" style="left:759.92px;top:1085.8px;font-size:27px;line-height:38px;color:#8a7bdc;transform:scaleX(1.0410);transform-origin:0 50%;">Body</span>
<span class="t" id="t61" style="left:887.97px;top:1085.8px;font-size:27px;line-height:38px;color:#dcdce4;transform:scaleX(1.0301);transform-origin:0 50%;">Cookie</span>
<span class="t" id="t62" style="left:1036.94px;top:1085.8px;font-size:27px;line-height:38px;color:#dcdce4;transform:scaleX(1.0282);transform-origin:0 50%;">Header</span>
<div class="b" style="left:1136px;top:1081px;width:32px;height:44px;background:#23232d;border-radius:16px;"></div>
<span class="t" id="t63" style="left:1145.00px;top:1087.5px;font-size:24px;line-height:34px;color:#25b76a;width:14px;text-align:center;">3</span>
<span class="t" id="t64" style="left:1232.00px;top:1085.7px;font-size:28px;line-height:39px;color:#dcdce4;letter-spacing:1.000px;">控制台</span>
<span class="t" id="t65" style="left:1380.00px;top:1085.7px;font-size:28px;line-height:39px;color:#dcdce4;">实际请求</span>
<div class="b" style="left:1498px;top:1100px;width:10px;height:10px;background:#1fba6a;border-radius:5px;"></div>
<div class="b" style="left:738px;top:1141px;width:1810px;height:2px;background:#262733;"></div>
<div class="b" style="left:738px;top:1139px;width:110px;height:4px;background:#8478cc;"></div>
<svg class="b" style="left:2457px;top:1089px;" width="26" height="28" viewBox="0 0 26 28" fill="none"><circle cx="19.5" cy="5.5" r="3.8" stroke="#8a7bdc" stroke-width="2.4"/><circle cx="6" cy="14" r="3.8" stroke="#8a7bdc" stroke-width="2.4"/><circle cx="19.5" cy="22.5" r="3.8" stroke="#8a7bdc" stroke-width="2.4"/><path d="M9.4 12.2 L16.2 7.4 M9.4 15.8 L16.2 20.6" stroke="#8a7bdc" stroke-width="2.4"/></svg>
<span class="t" id="t66" style="left:2492.00px;top:1085.5px;font-size:28px;line-height:39px;color:#8a7bdc;letter-spacing:1.000px;">分享</span>
<div class="b" style="left:2612px;top:1078px;width:536px;height:76px;background:#22222d;border-radius:18px;"></div>
<span class="t" id="t67" style="left:2634.93px;top:1099.0px;font-size:26px;line-height:36px;color:#25b76a;transform:scaleX(1.0735);transform-origin:0 50%;">200</span>
<span class="t" id="t68" style="left:2705.00px;top:1099.0px;font-size:26px;line-height:36px;color:#25b76a;transform:scaleX(1.0025);transform-origin:0 50%;">6.44 s</span>
<span class="t" id="t69" style="left:2800.98px;top:1099.0px;font-size:26px;line-height:36px;color:#25b76a;transform:scaleX(1.0213);transform-origin:0 50%;">105 B</span>
<div class="b" style="left:738px;top:1157px;width:407px;height:48px;background:#262733;border-radius:12px;"></div>
<div class="b" style="left:738px;top:1157px;width:94px;height:48px;background:#3a3b50;border-radius:12px;"></div>
<span class="t" id="t70" style="left:754.00px;top:1166.0px;font-size:24px;line-height:34px;color:#f0f0f4;transform:scaleX(0.9970);transform-origin:0 50%;">Pretty</span>
<span class="t" id="t71" style="left:848.10px;top:1166.0px;font-size:24px;line-height:34px;color:#b4b6c0;transform:scaleX(0.9019);transform-origin:0 50%;">Raw</span>
<span class="t" id="t72" style="left:924.05px;top:1166.0px;font-size:24px;line-height:34px;color:#b4b6c0;transform:scaleX(0.9468);transform-origin:0 50%;">Preview</span>
<span class="t" id="t73" style="left:1038.00px;top:1166.0px;font-size:24px;line-height:34px;color:#b4b6c0;transform:scaleX(0.9552);transform-origin:0 50%;">Visualize</span>
<span class="t" id="t74" style="left:1169.00px;top:1166.0px;font-size:24px;line-height:34px;color:#dcdce4;transform:scaleX(0.9094);transform-origin:0 50%;">JSON</span>
<svg class="b" style="left:1235px;top:1172px;" width="22" height="18" viewBox="0 0 22 18" fill="none"><path d="M2 2.5 L11 14.5 L20 2.5" stroke="#70727e" stroke-width="2" stroke-linecap="round" stroke-linejoin="round"/></svg>
<span class="t" id="t75" style="left:1293.94px;top:1166.0px;font-size:24px;line-height:34px;color:#dcdce4;transform:scaleX(1.0599);transform-origin:0 50%;">utf8</span>
<svg class="b" style="left:1345px;top:1172px;" width="22" height="18" viewBox="0 0 22 18" fill="none"><path d="M2 2.5 L11 14.5 L20 2.5" stroke="#70727e" stroke-width="2" stroke-linecap="round" stroke-linejoin="round"/></svg>
<div class="b" style="left:1397px;top:1153px;width:48px;height:56px;background:#232330;border-radius:13px;"></div>
<svg class="b" style="left:1408px;top:1169px;" width="26" height="24" viewBox="0 0 26 24" fill="none"><path d="M1.5 3 H24.5 M1.5 11.5 H19 a4.2 4.2 0 0 1 0 8.4 H15 M1.5 20 H9.5" stroke="#8478cc" stroke-width="2.4" stroke-linecap="round"/><path d="M17.5 16.5 L14.5 19.9 L17.5 23.3" stroke="#8478cc" stroke-width="2.4" stroke-linecap="round" stroke-linejoin="round"/></svg>
<svg class="b" style="left:2393px;top:1168px;" width="26" height="26" viewBox="0 0 28 28" fill="none"><path d="M14 2.5 V17 M8 11.5 L14 17.5 L20 11.5" stroke="#cdd1da" stroke-width="2.4" stroke-linecap="round" stroke-linejoin="round"/><path d="M2.5 16 V21 a3.5 3.5 0 0 0 3.5 3.5 H22 a3.5 3.5 0 0 0 3.5 -3.5 V16" stroke="#cdd1da" stroke-width="2.4" stroke-linecap="round"/></svg>
<svg class="b" style="left:2453px;top:1168px;" width="26" height="26" viewBox="0 0 28 28" fill="none"><rect x="2" y="7.5" width="17.5" height="18" rx="4" stroke="#cdd1da" stroke-width="2.4"/><path d="M8 3 H21 a4 4 0 0 1 4 4 V20.5" stroke="#cdd1da" stroke-width="2.4" stroke-linecap="round"/></svg>
<svg class="b" style="left:2513px;top:1168px;" width="26" height="26" viewBox="0 0 28 28" fill="none"><circle cx="12.5" cy="12.5" r="10" stroke="#cdd1da" stroke-width="2.5"/><path d="M20 20 L25.5 25.5" stroke="#cdd1da" stroke-width="2.5" stroke-linecap="round"/></svg>
<div class="b" style="left:738px;top:1219px;width:1810px;height:581px;background:#1b1b25;border:2px solid #2a2b31;border-radius:15px;overflow:hidden;"></div>
<div class="b" style="left:839px;top:1349px;width:1679px;height:32px;border:4px solid #282828;border-left:none;border-right:none;"></div>
<div class="b" style="left:838px;top:1254px;width:2px;height:96px;background:#4e4f55;"></div>
<div class="b" style="left:2517px;top:1221px;width:1px;height:577px;background:#2a2b34;"></div>
<div class="b" style="left:2518px;top:1221px;width:28px;height:473px;background:#3e3f44;border-radius:0 12px 0 0;border-left:1px solid #55565a;"></div>
<div class="b" style="left:2519px;top:1323px;width:27px;height:4px;background:#8a8c8c;"></div>
<div class="b" style="left:2518px;top:1349px;width:28px;height:32px;border:4px solid #47474a;border-left:none;"></div>
<span class="t" id="t76" style="left:780.00px;top:1223.5px;font-size:22px;line-height:31px;color:#85868a;font-family:'Liberation Mono','Noto Sans CJK SC',monospace;width:14px;text-align:right;">1</span>
<span class="t" id="t77" style="left:780.00px;top:1255.5px;font-size:22px;line-height:31px;color:#85868a;font-family:'Liberation Mono','Noto Sans CJK SC',monospace;width:14px;text-align:right;">2</span>
<span class="t" id="t78" style="left:780.00px;top:1287.5px;font-size:22px;line-height:31px;color:#85868a;font-family:'Liberation Mono','Noto Sans CJK SC',monospace;width:14px;text-align:right;">3</span>
<span class="t" id="t79" style="left:780.00px;top:1319.5px;font-size:22px;line-height:31px;color:#85868a;font-family:'Liberation Mono','Noto Sans CJK SC',monospace;width:14px;text-align:right;">4</span>
<span class="t" id="t80" style="left:780.00px;top:1351.5px;font-size:22px;line-height:31px;color:#c8c8cc;font-family:'Liberation Mono','Noto Sans CJK SC',monospace;width:14px;text-align:right;">5</span>
<span class="t" style="left:837.8px;top:1224px;font-size:22px;line-height:30px;font-family:'Liberation Mono',monospace;-webkit-text-stroke:0.3px;color:#dcdcdc">{</span>
<span class="t" style="left:837.8px;top:1256px;font-size:22px;line-height:30px;font-family:'Liberation Mono',monospace;-webkit-text-stroke:0.3px;color:#dcdcdc">    <span style="color:#9cdcfe">"code"</span>: <span style="color:#b5cea8">200</span>,</span>
<span class="t" style="left:837.8px;top:1288px;font-size:22px;line-height:30px;font-family:'Liberation Mono',monospace;-webkit-text-stroke:0.3px;color:#dcdcdc">    <span style="color:#9cdcfe">"result"</span>: <span style="color:#ce9178">"success"</span>,</span>
<span class="t" style="left:837.8px;top:1320px;font-size:22px;line-height:30px;font-family:'Liberation Mono',monospace;-webkit-text-stroke:0.3px;color:#dcdcdc">    <span style="color:#9cdcfe">"url"</span>: <span style="color:#ce9178">"<span style="text-decoration:underline;text-decoration-thickness:2px;text-underline-offset:7px;text-decoration-skip-ink:none">http://localhost:8080/i/2024/09/16/hpAAPv1726477188467485551.webp</span>"</span></span>
<span class="t" style="left:837.8px;top:1352px;font-size:22px;line-height:30px;font-family:'Liberation Mono',monospace;-webkit-text-stroke:0.3px;color:#dcdcdc">}</span>
<div class="b" style="left:3096px;top:1748px;width:64px;height:64px;border:2px solid #2a2b38;border-radius:15px;"></div>
<svg class="b" style="left:3114px;top:1766px;" width="28" height="28" viewBox="0 0 28 28" fill="none"><rect x="2" y="2" width="24" height="24" rx="3" stroke="#dcdce4" stroke-width="2.4"/><path d="M2 14 H26 M14 14 V26" stroke="#dcdce4" stroke-width="2.4"/></svg>
</section>
<footer id="status-bar">
<div class="b" style="left:706px;top:1830px;width:2474px;height:2px;background:#262733;"></div>
<svg class="b" style="left:740px;top:1854px;" width="28" height="24" viewBox="0 0 28 24" fill="none"><path d="M3 2 V22" stroke="#dcdce4" stroke-width="2.6" stroke-linecap="round"/><path d="M26 12 H9.5 M17 4.5 L9.5 12 L17 19.5" stroke="#dcdce4" stroke-width="2.6" stroke-linecap="round" stroke-linejoin="round"/></svg>
<svg class="b" style="left:2638px;top:1854px;" width="24" height="24" viewBox="0 0 26 26" fill="none"><circle cx="13" cy="13" r="10.6" stroke="#dcdce4" stroke-width="2.2"/><path d="M8 13.4 L11.6 17 L18.4 9.8" stroke="#dcdce4" stroke-width="2.2" stroke-linecap="round" stroke-linejoin="round"/></svg>
<span class="t" id="t81" style="left:2670.00px;top:1851.0px;font-size:24px;line-height:34px;color:#dcdce4;letter-spacing:1.000px;">在线</span>
<svg class="b" style="left:2764px;top:1853px;" width="26" height="26" viewBox="0 0 28 28" fill="none"><path d="M14 2.8 a11.2 11.2 0 1 0 11.2 11.2 a4.6 4.6 0 0 1 -5.6 -5.6 a4.6 4.6 0 0 1 -5.6 -5.6 Z" stroke="#dcdce4" stroke-width="2.2" stroke-linejoin="round"/><circle cx="9.5" cy="12" r="1.5" fill="#dcdce4"/><circle cx="11" cy="18.5" r="1.5" fill="#dcdce4"/><circle cx="17" cy="18" r="1.5" fill="#dcdce4"/><circle cx="14.5" cy="13.5" r="1.2" fill="#dcdce4"/></svg>
<span class="t" id="t82" style="left:2798.00px;top:1851.0px;font-size:24px;line-height:34px;color:#dcdce4;letter-spacing:-0.172px;">Cookie 管理</span>
<svg class="b" style="left:2967px;top:1852px;" width="27" height="27" viewBox="0 0 30 30" fill="none"><circle cx="15" cy="15" r="12.4" stroke="#dcdce4" stroke-width="2.3"/><path d="M15 22 V9.5 M9.5 14.5 L15 9 L20.5 14.5" stroke="#dcdce4" stroke-width="2.3" stroke-linecap="round" stroke-linejoin="round"/></svg>
<svg class="b" style="left:3030px;top:1852px;" width="28" height="28" viewBox="0 0 30 30" fill="none"><path d="M10.5 3 a4.5 4.5 0 0 0 9 0 L27.5 6.5 L25.5 14 L22.5 13 V27 H7.5 V13 L4.5 14 L2.5 6.5 Z" stroke="#dcdce4" stroke-width="2.3" stroke-linejoin="round"/></svg>
<svg class="b" style="left:3094px;top:1852px;" width="28" height="28" viewBox="0 0 30 30" fill="none"><circle cx="15" cy="15" r="12.4" stroke="#dcdce4" stroke-width="2.3"/><path d="M11.2 11.8 a3.9 3.9 0 1 1 5.6 3.5 c-1.3 .7 -1.8 1.4 -1.8 2.8" stroke="#dcdce4" stroke-width="2.3" stroke-linecap="round"/><circle cx="15" cy="21.8" r="1.5" fill="#dcdce4"/></svg>
<div class="b" style="left:2776px;top:86px;width:424px;height:64px;background:#222225;"></div>
<div class="b" style="left:2788px;top:102px;width:2px;height:32px;background:#77787c;"></div>
<div class="b" style="left:2795px;top:102px;width:2px;height:32px;background:#77787c;"></div>
<span class="t" id="t83" style="left:2819.00px;top:91.5px;font-size:42px;line-height:59px;color:#f2f2f2;">英</span>
<svg class="b" style="left:2880px;top:96px;" width="46" height="46" viewBox="0 0 46 46" fill="none"><path d="M27.6 2.7 C37 8 42 16 41 24 C40 34 32 41.3 22.3 41.3 C14 41.3 8 38 4.5 32.4 C12 33.5 22 31 27 24 C31.5 17.5 31.5 9 27.6 2.7 Z" stroke="#f2f2f2" stroke-width="2.6" stroke-linejoin="round"/></svg>
<div class="b" style="left:2952.7px;top:103.3px;width:12.600000000000364px;height:12.600000000000009px;background:#f2f2f2;border-radius:7px;"></div>
<svg class="b" style="left:2966px;top:116px;" width="20" height="20" viewBox="0 0 20 20" fill="none"><path d="M7.7 3 H16 L11 17 H4 Z" fill="#f2f2f2"/></svg>
<span class="t" id="t84" style="left:3011.00px;top:91.5px;font-size:42px;line-height:59px;color:#f2f2f2;">简</span>
<svg class="b" style="left:3075px;top:97px;" width="42" height="42" viewBox="0 0 42 42" fill="none"><circle cx="21" cy="21" r="18.6" stroke="#f2f2f2" stroke-width="2.6"/><circle cx="14.5" cy="16" r="2.4" fill="#f2f2f2"/><circle cx="27.5" cy="16" r="2.4" fill="#f2f2f2"/><path d="M11.5 25.5 a10.5 10.5 0 0 0 19 0" stroke="#f2f2f2" stroke-width="2.6" stroke-linecap="round"/></svg>
<svg class="b" style="left:3138px;top:96px;" width="44" height="44" viewBox="0 0 44 44" fill="none"><path d="M22.3 7.8 L22.6 7.8 L22.9 7.8 L23.1 7.8 L23.4 7.8 L23.7 7.9 L24.0 7.9 L24.3 7.9 L24.7 7.3 L25.1 6.6 L25.5 5.9 L26.0 5.2 L26.5 4.5 L27.1 3.9 L27.4 4.0 L27.8 4.1 L28.1 4.2 L28.5 4.3 L28.8 4.5 L29.2 4.6 L29.5 4.7 L29.9 4.9 L30.2 5.0 L30.5 5.2 L30.9 5.4 L31.2 5.5 L31.5 5.7 L31.9 5.9 L31.8 6.7 L31.7 7.5 L31.6 8.4 L31.4 9.2 L31.2 10.0 L31.0 10.7 L31.2 10.9 L31.4 11.1 L31.7 11.3 L31.9 11.4 L32.1 11.6 L32.3 11.8 L32.5 12.0 L32.7 12.2 L32.9 12.4 L33.1 12.6 L33.2 12.8 L33.4 13.1 L33.6 13.3 L33.8 13.5 L34.5 13.3 L35.3 13.1 L36.1 12.9 L37.0 12.8 L37.8 12.7 L38.6 12.6 L38.8 13.0 L39.0 13.3 L39.1 13.6 L39.3 14.0 L39.5 14.3 L39.6 14.6 L39.8 15.0 L39.9 15.3 L40.0 15.7 L40.2 16.0 L40.3 16.4 L40.4 16.7 L40.5 17.1 L40.6 17.4 L40.0 18.0 L39.3 18.5 L38.6 19.0 L37.9 19.4 L37.2 19.8 L36.6 20.2 L36.6 20.5 L36.6 20.8 L36.7 21.1 L36.7 21.4 L36.7 21.6 L36.7 21.9 L36.7 22.2 L36.7 22.5 L36.7 22.8 L36.7 23.0 L36.7 23.3 L36.6 23.6 L36.6 23.9 L36.6 24.2 L37.2 24.6 L37.9 25.0 L38.6 25.4 L39.3 25.9 L40.0 26.4 L40.6 27.0 L40.5 27.3 L40.4 27.7 L40.3 28.0 L40.2 28.4 L40.0 28.7 L39.9 29.1 L39.8 29.4 L39.6 29.8 L39.5 30.1 L39.3 30.4 L39.1 30.8 L39.0 31.1 L38.8 31.4 L38.6 31.8 L37.8 31.7 L37.0 31.6 L36.1 31.5 L35.3 31.3 L34.5 31.1 L33.8 30.9 L33.6 31.1 L33.4 31.3 L33.2 31.6 L33.1 31.8 L32.9 32.0 L32.7 32.2 L32.5 32.4 L32.3 32.6 L32.1 32.8 L31.9 33.0 L31.7 33.1 L31.4 33.3 L31.2 33.5 L31.0 33.7 L31.2 34.4 L31.4 35.2 L31.6 36.0 L31.7 36.9 L31.8 37.7 L31.9 38.5 L31.5 38.7 L31.2 38.9 L30.9 39.0 L30.5 39.2 L30.2 39.4 L29.9 39.5 L29.5 39.7 L29.2 39.8 L28.8 39.9 L28.5 40.1 L28.1 40.2 L27.8 40.3 L27.4 40.4 L27.1 40.5 L26.5 39.9 L26.0 39.2 L25.5 38.5 L25.1 37.8 L24.7 37.1 L24.3 36.5 L24.0 36.5 L23.7 36.5 L23.4 36.6 L23.1 36.6 L22.9 36.6 L22.6 36.6 L22.3 36.6 L22.0 36.6 L21.7 36.6 L21.5 36.6 L21.2 36.6 L20.9 36.5 L20.6 36.5 L20.3 36.5 L19.9 37.1 L19.5 37.8 L19.1 38.5 L18.6 39.2 L18.1 39.9 L17.5 40.5 L17.2 40.4 L16.8 40.3 L16.5 40.2 L16.1 40.1 L15.8 39.9 L15.4 39.8 L15.1 39.7 L14.7 39.5 L14.4 39.4 L14.1 39.2 L13.7 39.0 L13.4 38.9 L13.1 38.7 L12.7 38.5 L12.8 37.7 L12.9 36.9 L13.0 36.0 L13.2 35.2 L13.4 34.4 L13.6 33.7 L13.4 33.5 L13.2 33.3 L12.9 33.1 L12.7 33.0 L12.5 32.8 L12.3 32.6 L12.1 32.4 L11.9 32.2 L11.7 32.0 L11.5 31.8 L11.4 31.6 L11.2 31.3 L11.0 31.1 L10.8 30.9 L10.1 31.1 L9.3 31.3 L8.5 31.5 L7.6 31.6 L6.8 31.7 L6.0 31.8 L5.8 31.4 L5.6 31.1 L5.5 30.8 L5.3 30.4 L5.1 30.1 L5.0 29.8 L4.8 29.4 L4.7 29.1 L4.6 28.7 L4.4 28.4 L4.3 28.0 L4.2 27.7 L4.1 27.3 L4.0 27.0 L4.6 26.4 L5.3 25.9 L6.0 25.4 L6.7 25.0 L7.4 24.6 L8.0 24.2 L8.0 23.9 L8.0 23.6 L7.9 23.3 L7.9 23.0 L7.9 22.8 L7.9 22.5 L7.9 22.2 L7.9 21.9 L7.9 21.6 L7.9 21.4 L7.9 21.1 L8.0 20.8 L8.0 20.5 L8.0 20.2 L7.4 19.8 L6.7 19.4 L6.0 19.0 L5.3 18.5 L4.6 18.0 L4.0 17.4 L4.1 17.1 L4.2 16.7 L4.3 16.4 L4.4 16.0 L4.6 15.7 L4.7 15.3 L4.8 15.0 L5.0 14.6 L5.1 14.3 L5.3 14.0 L5.5 13.6 L5.6 13.3 L5.8 13.0 L6.0 12.6 L6.8 12.7 L7.6 12.8 L8.5 12.9 L9.3 13.1 L10.1 13.3 L10.8 13.5 L11.0 13.3 L11.2 13.1 L11.4 12.8 L11.5 12.6 L11.7 12.4 L11.9 12.2 L12.1 12.0 L12.3 11.8 L12.5 11.6 L12.7 11.4 L12.9 11.3 L13.2 11.1 L13.4 10.9 L13.6 10.7 L13.4 10.0 L13.2 9.2 L13.0 8.4 L12.9 7.5 L12.8 6.7 L12.7 5.9 L13.1 5.7 L13.4 5.5 L13.7 5.4 L14.1 5.2 L14.4 5.0 L14.7 4.9 L15.1 4.7 L15.4 4.6 L15.8 4.5 L16.1 4.3 L16.5 4.2 L16.8 4.1 L17.2 4.0 L17.5 3.9 L18.1 4.5 L18.6 5.2 L19.1 5.9 L19.5 6.6 L19.9 7.3 L20.3 7.9 L20.6 7.9 L20.9 7.9 L21.2 7.8 L21.5 7.8 L21.7 7.8 L22.0 7.8 Z" stroke="#f2f2f2" stroke-width="2.6" stroke-linejoin="round"/><circle cx="22.3" cy="22.2" r="8.2" stroke="#f2f2f2" stroke-width="2.6"/></svg>
</footer>
</body></html>
